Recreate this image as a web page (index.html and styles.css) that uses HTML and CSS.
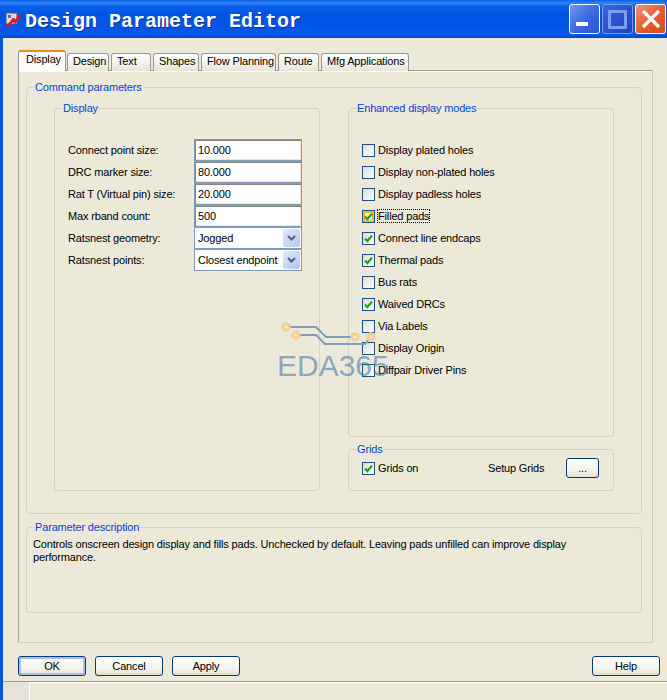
FILE: index.html
```html
<!DOCTYPE html>
<html lang="en">
<head>
  <meta charset="UTF-8">
  <meta name="viewport" content="width=device-width, initial-scale=1.0">
  <title>Design Parameter Editor</title>
  <link rel="stylesheet" href="styles.css">
</head>
<body>

  <svg class="defs" width="0" height="0">
    <symbol id="tick" viewBox="0 0 9 9">
      <path d="M1 4.5 L3.4 7 L8 1.6" fill="none" stroke="#21a121" stroke-width="2.2"/>
    </symbol>
  </svg>

  <div class="window">
    <!-- Title bar -->
    <header class="titlebar">
      <svg class="app-icon" width="17" height="17" viewBox="0 0 17 17">
        <rect x="1" y="1" width="11" height="11" fill="#d8d8e8" stroke="#555577"/>
        <rect x="3" y="3" width="3" height="3" fill="#6a6a9a"/>
        <rect x="7" y="6" width="3" height="3" fill="#6a6a9a"/>
        <path d="M2 15 L8 8 L10 10 L15 3" fill="none" stroke="#e8101c" stroke-width="2.6"/>
      </svg>
      <h1 class="title">Design Parameter Editor</h1>
      <div class="controls">
        <div class="ctl ctl-min"><span></span></div>
        <div class="ctl ctl-max"><span></span></div>
        <div class="ctl ctl-close">
          <svg width="20" height="20" viewBox="0 0 20 20">
            <path d="M2 2 L18 18 M18 2 L2 18" stroke="#fff" stroke-width="3.4"/>
          </svg>
        </div>
      </div>
    </header>

    <div class="dialog">
      <!-- Tabs -->
      <ul class="tabs">
        <li class="tab active tab-display">Display</li>
        <li class="tab tab-design">Design</li>
        <li class="tab tab-text">Text</li>
        <li class="tab tab-shapes">Shapes</li>
        <li class="tab tab-flow">Flow Planning</li>
        <li class="tab tab-route">Route</li>
        <li class="tab tab-mfg">Mfg Applications</li>
      </ul>

      <div class="pane">
        <fieldset class="group group-command">
          <legend>Command parameters</legend>
          <div class="columns">
            <fieldset class="group group-display">
              <legend>Display</legend>
              <div class="fields">
                <div class="field"><label>Connect point size:</label><div class="input">10.000</div></div>
                <div class="field"><label>DRC marker size:</label><div class="input">80.000</div></div>
                <div class="field"><label>Rat T (Virtual pin) size:</label><div class="input">20.000</div></div>
                <div class="field"><label>Max rband count:</label><div class="input">500</div></div>
                <div class="field"><label>Ratsnest geometry:</label><div class="select"><span>Jogged</span><i class="arrow"><svg width="9" height="6" viewBox="0 0 9 6"><path d="M1 1 L4.5 4.5 L8 1" fill="none" stroke="#4d6185" stroke-width="2"/></svg></i></div></div>
                <div class="field"><label>Ratsnest points:</label><div class="select"><span>Closest endpoint</span><i class="arrow"><svg width="9" height="6" viewBox="0 0 9 6"><path d="M1 1 L4.5 4.5 L8 1" fill="none" stroke="#4d6185" stroke-width="2"/></svg></i></div></div>
              </div>
            </fieldset>

            <div class="right-col">
              <fieldset class="group group-modes">
                <legend>Enhanced display modes</legend>
                <ul class="checks">
                  <li class="check"><span class="box"></span>Display plated holes</li>
                  <li class="check"><span class="box"></span>Display non-plated holes</li>
                  <li class="check"><span class="box"></span>Display padless holes</li>
                  <li class="check"><span class="box box-hover"><svg><use href="#tick"/></svg></span><span class="focus">Filled pads</span></li>
                  <li class="check"><span class="box"><svg><use href="#tick"/></svg></span>Connect line endcaps</li>
                  <li class="check"><span class="box"><svg><use href="#tick"/></svg></span>Thermal pads</li>
                  <li class="check"><span class="box"></span>Bus rats</li>
                  <li class="check"><span class="box"><svg><use href="#tick"/></svg></span>Waived DRCs</li>
                  <li class="check"><span class="box"></span>Via Labels</li>
                  <li class="check"><span class="box"></span>Display Origin</li>
                  <li class="check"><span class="box"></span>Diffpair Driver Pins</li>
                </ul>
              </fieldset>

              <fieldset class="group group-grids">
                <legend>Grids</legend>
                <div class="grids-row">
                  <div class="check check-grids"><span class="box"><svg><use href="#tick"/></svg></span>Grids on</div>
                  <span class="setup-label">Setup Grids</span>
                  <button class="btn btn-dots">...</button>
                </div>
              </fieldset>
            </div>
          </div>
        </fieldset>

        <fieldset class="group group-desc">
          <legend>Parameter description</legend>
          <p class="desc">Controls onscreen design display and fills pads. Unchecked by default. Leaving pads unfilled can improve display performance.</p>
        </fieldset>
      </div>

      <!-- Bottom buttons -->
      <div class="actions">
        <button class="btn btn-default">OK</button>
        <button class="btn">Cancel</button>
        <button class="btn">Apply</button>
        <button class="btn btn-help">Help</button>
      </div>
    </div>

    <footer class="statusbar"><div class="status-cell"></div></footer>
  </div>

  <!-- Watermark over the dialog -->
  <div class="watermark">
    <svg width="120" height="40" viewBox="0 0 120 40">
      <path d="M9 7 H39 L49 17 H78" fill="none" stroke="#7d9fc2" stroke-width="2"/>
      <path d="M19 15 H39 L48 24 H88 L94 17" fill="none" stroke="#7d9fc2" stroke-width="2"/>
      <g fill="#ece9d8" stroke="#f3cf94" stroke-width="3">
        <circle cx="9" cy="7" r="3.2"/>
        <circle cx="19" cy="15" r="3.2"/>
        <circle cx="78" cy="17" r="3.2"/>
        <circle cx="94" cy="17" r="3.2"/>
      </g>
    </svg>
    <div class="watermark-text">EDA365</div>
  </div>

</body>
</html>
```

FILE: styles.css
```css
* {
  box-sizing: border-box;
}

body {
  font-family: "Liberation Sans", Tahoma, sans-serif;
  font-size: 11px;
  letter-spacing: -0.16px;
  color: #000;
  margin: 0;
  height: 700px;
  overflow: hidden;
  position: relative;
  background: #ece9d8;
}

.defs {
  position: absolute;
}

.window {
  display: flex;
  flex-direction: column;
  height: 700px;
  border-left: 3px solid #0855dd;
  background: #ece9d8;
}

/* Title bar */
.titlebar {
  display: flex;
  align-items: center;
  height: 38px;
  margin-left: -3px;
  padding: 0 1px 0 5px;
  background: linear-gradient(to bottom, #0a5fe8 0, #2b85f5 3px, #0a62ec 6px, #0054e3 14px, #0056e6 28px, #0a5ae8 34px, #0048c8 38px);
}

.app-icon {
  flex: none;
  margin-top: 2px;
}

.title {
  margin: 5px 0 0 3px;
  font-family: "Liberation Mono", monospace;
  font-size: 20px;
  font-weight: bold;
  letter-spacing: 0;
  color: #fff;
  text-shadow: 1px 1px 0 #0f2f9a;
}

.controls {
  margin-left: auto;
  display: flex;
  gap: 2px;
}

.ctl {
  width: 31px;
  height: 30px;
  border: 1px solid #fff;
  border-radius: 3px;
  display: flex;
  align-items: center;
  justify-content: center;
  position: relative;
}

.ctl-min {
  background: linear-gradient(135deg, #6f96ee, #3a66e0 55%, #2a55d8);
}

.ctl-min span {
  position: absolute;
  left: 6px;
  bottom: 7px;
  width: 12px;
  height: 4px;
  background: #fff;
}

.ctl-max {
  border-color: #7f9df0;
  background: linear-gradient(135deg, #3a64dc, #2a50cc 60%, #1e44c2);
}

.ctl-max span {
  width: 19px;
  height: 19px;
  border: 3px solid #7f9df0;
}

.ctl-close {
  background: linear-gradient(135deg, #ef9478, #e45a2a 55%, #d94a14);
}

/* Dialog */
.dialog {
  flex: 1;
  padding: 12px 7px 0 15px;
}

.tabs {
  list-style: none;
  margin: 0;
  padding: 0;
  display: flex;
  align-items: flex-end;
  height: 21px;
  position: relative;
  z-index: 1;
}

.tab {
  height: 18px;
  margin-right: 2px;
  padding: 0 0 0 5px;
  line-height: 15px;
  background: linear-gradient(to bottom, #fefefe, #f2f1e8 60%, #e6e4d6);
  border: 1px solid #919b9c;
  border-bottom: 0;
  border-radius: 3px 3px 0 0;
  white-space: nowrap;
}

.tab.active {
  height: 21px;
  margin-right: 1px;
  padding-left: 7px;
  background: #fff;
  border-color: #fff #919b9c #fff #919b9c;
  border-top: 2px solid #e68b2c;
  line-height: 15px;
}

.tab-display { width: 48px; }
.tab-design { width: 42px; }
.tab-text { width: 40px; }
.tab-shapes { width: 46px; }
.tab-flow { width: 75px; }
.tab-route { width: 41px; }
.tab-mfg { width: 88px; }

.pane {
  width: 635px;
  height: 573px;
  margin-top: -1px;
  padding: 9px 9px 0 7px;
  border: 1px solid #cfcdbc;
  border-top: 1px solid #919b9c;
  border-left: 1px solid #a5a598;
  box-shadow: inset 0 1px 0 #fff;
}

/* Group boxes */
.group {
  margin: 0;
  padding: 0;
  min-width: 0;
  border: 1px solid #d5d2c0;
  border-radius: 4px;
}

.group legend {
  margin-left: 7px;
  padding: 0 1px;
  color: #0046d5;
  line-height: 14px;
}

.group-command {
  width: 616px;
  height: 434px;
}

.columns {
  display: flex;
  gap: 28px;
  padding: 7px 0 0 27px;
}

.group-display {
  width: 266px;
  height: 390px;
}

.right-col {
  width: 266px;
}

.group-modes {
  height: 336px;
}

.group-grids {
  height: 49px;
  margin-top: 5px;
}

.group-desc {
  width: 616px;
  height: 93px;
  margin-top: 6px;
}

/* Display fields */
.fields {
  display: flex;
  flex-direction: column;
  gap: 1px;
  padding: 24px 0 0 13px;
}

.field {
  display: flex;
  align-items: center;
  height: 21px;
}

.field label {
  width: 126px;
}

.input,
.select {
  width: 108px;
  height: 22px;
  border: 1px solid #7f9db9;
  background: #fff;
  display: flex;
  align-items: center;
  white-space: nowrap;
}

.input {
  padding-left: 3px;
  box-shadow: inset 1px 1px 0 #8a8678, inset -1px -1px 0 #ece9d8;
}

.select {
  padding-left: 3px;
  justify-content: space-between;
}

.arrow {
  flex: none;
  width: 17px;
  height: 18px;
  margin-right: 1px;
  border-radius: 2px;
  background: linear-gradient(135deg, #dfe7fb, #b4c6f2);
  display: flex;
  align-items: center;
  justify-content: center;
}

/* Checkboxes */
.checks {
  list-style: none;
  margin: 0;
  padding: 24px 0 0 13px;
}

.check {
  display: flex;
  align-items: center;
  height: 22px;
  white-space: nowrap;
}

.box {
  flex: none;
  width: 13px;
  height: 13px;
  margin-right: 3px;
  border: 1px solid #1c5180;
  background: linear-gradient(135deg, #dcdcd7, #fff);
  display: flex;
  align-items: center;
  justify-content: center;
}

.box svg {
  width: 9px;
  height: 9px;
}

.box-hover {
  box-shadow: inset 0 0 0 2px #f8b636;
}

.focus {
  outline: 1px dotted #000;
  outline-offset: 0;
}

.grids-row {
  display: flex;
  align-items: center;
  height: 24px;
  padding-left: 13px;
}

.check-grids {
  width: 126px;
}

.setup-label {
  white-space: nowrap;
}

.desc {
  width: 560px;
  margin: 4px 6px 0;
  line-height: 13px;
}

/* Buttons */
.actions {
  display: flex;
  gap: 9px;
  margin-top: 13px;
}

.btn {
  width: 68px;
  height: 20px;
  padding: 0;
  font-family: inherit;
  font-size: 11px;
  letter-spacing: inherit;
  color: #000;
  border: 1px solid #003c74;
  border-radius: 3px;
  background: linear-gradient(to bottom, #fff, #f3f2ea 70%, #e0ddd0);
}

.btn-dots {
  margin-left: auto;
  margin-right: 14px;
  width: 33px;
  height: 20px;
}

.btn-default {
  box-shadow: inset 0 0 0 2px #a9bfea;
}

.btn-help {
  margin-left: auto;
}

.statusbar {
  height: 19px;
  border-top: 1px solid #a09e90;
  box-shadow: inset 0 1px 0 #fff;
  background: #ece9d8;
}

.status-cell {
  width: 27px;
  height: 100%;
  border-right: 1px solid #fff;
  background: #e6e4d8;
}

/* Watermark */
.watermark {
  position: absolute;
  left: 277px;
  top: 320px;
  width: 120px;
  pointer-events: none;
}

.watermark svg {
  display: block;
}

.watermark-text {
  position: absolute;
  left: 0;
  top: 28px;
  font-family: "Liberation Sans", sans-serif;
  font-size: 30px;
  letter-spacing: 0;
  line-height: 36px;
  color: rgba(70, 122, 175, 0.6);
}
```
